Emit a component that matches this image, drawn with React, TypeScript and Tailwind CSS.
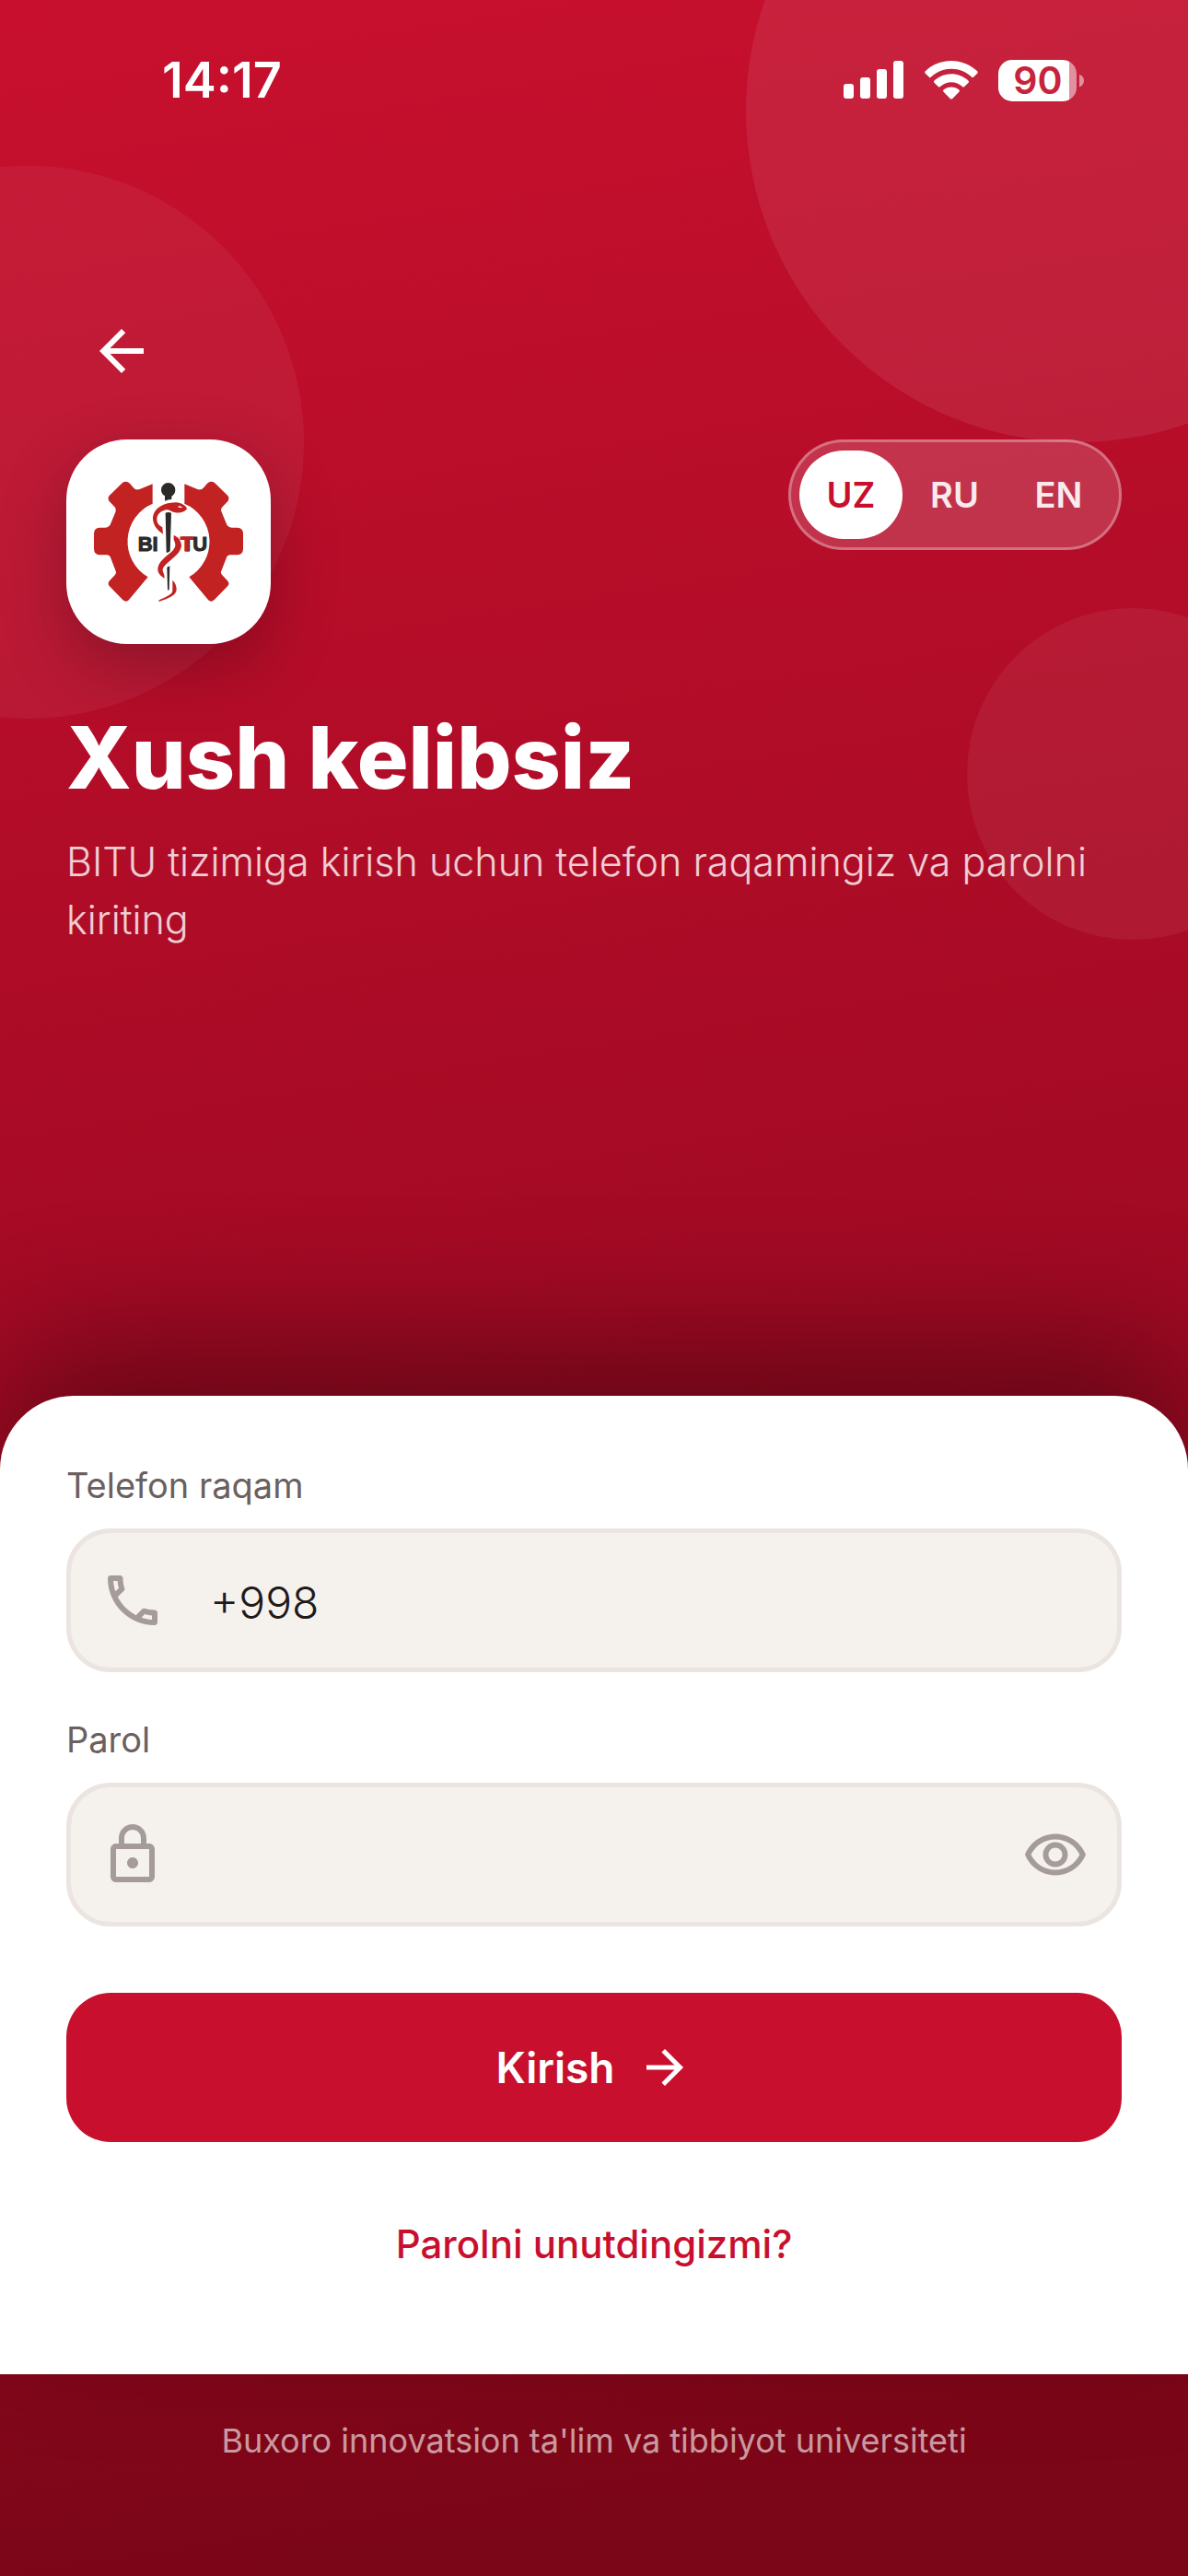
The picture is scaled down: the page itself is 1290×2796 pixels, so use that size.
import { useState } from "react";
import type { ReactNode } from "react";

const LANGUAGES = ["UZ", "RU", "EN"];

function SignalIcon() {
  return (
    <svg className="h-[42px] w-[66px]" viewBox="0 0 66 42" fill="currentColor" aria-hidden="true">
      <rect x="0" y="25" width="11" height="16" rx="3" />
      <rect x="18" y="18" width="11" height="23" rx="3" />
      <rect x="36" y="9" width="11" height="32" rx="3" />
      <rect x="54" y="0" width="11" height="41" rx="3" />
    </svg>
  );
}

function WifiIcon() {
  return (
    <svg className="h-[42px] w-[58px]" viewBox="0 0 58 42" fill="currentColor" aria-hidden="true">
      <path d="M29 0C39.500 0 49.500 4 57.200 11.300Q58.400 12.500 57.200 13.700L53.300 17.600Q52.200 18.700 51 17.500C45 12 37.500 8.800 29 8.800S13 12 7 17.500Q5.800 18.700 4.700 17.600L.8 13.700Q-.4 12.500 .8 11.300C8.500 4 18.500 0 29 0Z" />
      <path d="M29 14.300C36 14.300 42.500 17 47.400 21.500Q48.600 22.700 47.400 23.900L43.200 28Q42.200 29 41 28C37.600 25 33.500 23.200 29 23.200S20.400 25 17 28Q15.800 29 14.800 28L10.600 23.900Q9.400 22.700 10.600 21.500C15.500 17 22 14.300 29 14.300Z" />
      <path d="M29 28.500C32.300 28.500 35.200 29.600 37.400 31.500Q38.500 32.500 37.400 33.700L30.300 41Q29 42.200 27.700 41L20.600 33.700Q19.500 32.500 20.600 31.500C22.800 29.600 25.700 28.500 29 28.500Z" />
    </svg>
  );
}

function Battery() {
  return (
    <div className="relative h-[45px] w-[94px]">
      <svg className="absolute inset-0 size-full" viewBox="0 0 94 45" aria-hidden="true">
        <clipPath id="battery-level">
          <rect width="77" height="45" />
        </clipPath>
        <clipPath id="battery-rest">
          <rect x="77" width="8" height="45" />
        </clipPath>
        <rect width="85" height="45" rx="15" fill="#fff" fillOpacity="0.5" clipPath="url(#battery-rest)" />
        <rect width="85" height="45" rx="15" fill="#fff" clipPath="url(#battery-level)" />
        <path d="M88 16C91.500 17 93 19.500 93 22.500S91.500 28 88 29.500Z" fill="#fff" fillOpacity="0.5" />
      </svg>
      <span className="relative block w-[86px] text-center text-[41px] leading-[45px] font-semibold text-[#c8233c]">
        90
      </span>
    </div>
  );
}

function ArrowIcon({ className }: { className: string }) {
  return (
    <svg className={className} viewBox="0 0 24 24" fill="currentColor" aria-hidden="true">
      <path d="M12 4l-1.410 1.410L16.170 11H4v2h12.170l-5.580 5.590L12 20l8-8z" />
    </svg>
  );
}

function PhoneIcon() {
  return (
    <svg className="size-[72px] shrink-0" viewBox="0 0 24 24" fill="currentColor" aria-hidden="true">
      <path d="M6.540 5c.06.890.210 1.760.450 2.590l-1.200 1.200c-.410-1.200-.670-2.470-.760-3.790h1.510m9.860 12.020c.850.240 1.720.390 2.600.450v1.490c-1.320-.090-2.590-.350-3.800-.750l1.200-1.190M7.500 3H4c-.550 0-1 .450-1 1 0 9.390 7.610 17 17 17 .550 0 1-.450 1-1v-3.490c0-.550-.450-1-1-1-1.240 0-2.450-.200-3.570-.570-.100-.040-.210-.050-.310-.050-.260 0-.510.100-.710.290l-2.200 2.200c-2.830-1.450-5.150-3.760-6.590-6.590l2.200-2.200c.280-.280.360-.670.250-1.020C8.700 6.450 8.500 5.250 8.500 4c0-.550-.450-1-1-1z" />
    </svg>
  );
}

function LockIcon() {
  return (
    <svg className="size-[72px] shrink-0" viewBox="0 0 24 24" fill="currentColor" aria-hidden="true">
      <path d="M18 8h-1V6c0-2.760-2.240-5-5-5S7 3.240 7 6v2H6c-1.100 0-2 .900-2 2v10c0 1.100.900 2 2 2h12c1.100 0 2-.900 2-2V10c0-1.100-.900-2-2-2zM9 6c0-1.660 1.340-3 3-3s3 1.340 3 3v2H9V6zm9 14H6V10h12v10zm-6-3c1.100 0 2-.900 2-2s-.900-2-2-2-2 .900-2 2 .900 2 2 2z" />
    </svg>
  );
}

function EyeIcon() {
  return (
    <svg className="size-[72px]" viewBox="0 0 24 24" fill="currentColor" aria-hidden="true">
      <path d="M12 6.500c3.790 0 7.170 2.130 8.820 5.500-1.650 3.370-5.020 5.500-8.820 5.500S4.830 15.370 3.180 12C4.830 8.630 8.210 6.500 12 6.500m0-2C7 4.500 2.730 7.610 1 12c1.730 4.390 6 7.500 11 7.500s9.270-3.110 11-7.500c-1.730-4.390-6-7.500-11-7.500zm0 5c1.380 0 2.500 1.120 2.500 2.500s-1.120 2.500-2.500 2.500-2.500-1.120-2.500-2.500 1.120-2.500 2.500-2.500m0-2c-2.480 0-4.500 2.020-4.500 4.500s2.020 4.500 4.500 4.500 4.500-2.020 4.500-4.500-2.020-4.500-4.500-4.500z" />
    </svg>
  );
}

const HALF_GEAR =
  "M317 196L275 213Q262 218 253 206L243 194Q231 184 219 192L176 234Q170 242 175 251L193 270Q200 277 197 285L182 322Q177 338 163 338H144Q127 339 126 356V408Q127 426 144 427H168Q178 427 181 438L197 479Q201 486 194 493L177 511Q169 520 176 528L219 572Q231 584 240 573L302 499A134 134 0 0 1 317 260Z";

function Logo() {
  return (
    <svg className="size-full" viewBox="36 51 666 666" role="img" aria-label="BITU">
      <path d={HALF_GEAR} fill="#c22222" />
      <path d={HALF_GEAR} fill="#c22222" transform="matrix(-1 0 0 1 738 0)" />
      <g fontFamily="Liberation Sans, sans-serif" fontWeight="700" fontSize="66" strokeWidth="3">
        <text x="269" y="415" fill="#2b2a29" stroke="#2b2a29">BI</text>
        <text x="412" y="413" fill="#2b2a29" stroke="#2b2a29">T</text>
        <text x="448" y="415" fill="#2b2a29" stroke="#2b2a29">U</text>
        <text x="407" y="415" fill="#c22222" stroke="#c22222">T</text>
      </g>
      <path d="M357 248V235C348 230 345 222 345 215A23 23 0 0 1 391 215C391 223 387 231 379 236V246Q367 247 357 251Z" fill="#2b2a29" />
      <path d="M359 290Q368 286 378 290L374 414Q368 421 362 419Z" fill="#2b2a29" />
      <path d="M364 467L373 463L371 538Q368 547 366 538Z" fill="#2b2a29" />
      <path
        d="M351 359C330 345 317 328 318 304C321 277 350 257 392 256C412 257 427 267 429 277C423 288 405 292 387 288C377 285 370 279 361 280C342 285 332 295 331 310C331 325 339 332 349 337Z"
        fill="#c22222"
      />
      <path d="M399 270Q405 264 415 272Q405 275 399 270Z" fill="#fff" />
      <path
        d="M386 363C400 367 411 382 411 397C409 419 388 434 370 449C358 460 349 468 350 477C351 485 356 488 356 503C342 496 333 484 334 471C337 450 357 435 374 421C389 408 397 397 386 378Z"
        fill="#c22222"
      />
      <path d="M382 509C391 518 395 528 395 540C394 558 372 567 338 579C336 577 337 576 339 574C358 564 383 556 382 543Z" fill="#c22222" />
    </svg>
  );
}

function Field({
  id,
  label,
  icon,
  children,
}: {
  id: string;
  label: string;
  icon: ReactNode;
  children: ReactNode;
}) {
  return (
    <div className="flex flex-col gap-6">
      <label htmlFor={id} className="text-[38px] leading-[45px] text-[#6b5f5f]">
        {label}
      </label>
      <div className="flex h-[156px] items-center rounded-[48px] border-[5px] border-[#ebe4e0] bg-[#f5f1ed] px-[31px] text-[#a69b9b]">
        {icon}
        {children}
      </div>
    </div>
  );
}

export default function App() {
  const [language, setLanguage] = useState("UZ");
  const [phone, setPhone] = useState("+998");
  const [password, setPassword] = useState("");
  const [visible, setVisible] = useState(false);

  return (
    <div className="relative flex min-h-screen flex-col overflow-hidden bg-[linear-gradient(171deg,#c8102e_0%,#a30a24_50%,#7a0617_96%)] font-[Inter,sans-serif] text-white">
      <div className="absolute -top-60 -right-60 size-[720px] rounded-full bg-white/8" />
      <div className="absolute top-[180px] -left-[270px] size-[600px] rounded-full bg-white/5" />
      <div className="absolute top-[660px] -right-[120px] size-[360px] rounded-full bg-white/6" />

      <div className="relative flex h-[174px] items-center justify-between pr-[112px] pl-[176px]">
        <time className="text-[54px] leading-[60px] font-semibold">14:17</time>
        <div className="flex items-center gap-[22px]">
          <SignalIcon />
          <WifiIcon />
          <Battery />
        </div>
      </div>

      <header className="relative px-[72px] pt-[147px]">
        <button type="button" aria-label="Orqaga" className="flex size-[120px] items-center justify-center">
          <ArrowIcon className="size-[72px] rotate-180" />
        </button>
        <div className="mt-9 flex items-start justify-between">
          <div className="size-[222px] rounded-[66px] bg-white shadow-[0_24px_70px_rgba(0,0,0,0.25)]">
            <Logo />
          </div>
          <div className="flex h-[120px] rounded-full border-[3px] border-white/30 bg-white/16 p-[9px]">
            {LANGUAGES.map((code) => (
              <button
                key={code}
                type="button"
                aria-pressed={language === code}
                onClick={() => setLanguage(code)}
                className={
                  language === code
                    ? "w-[112px] rounded-full bg-white text-[38px] font-semibold text-[#c8102e]"
                    : "w-[113px] rounded-full text-[38px] font-semibold text-white/90"
                }
              >
                {code}
              </button>
            ))}
          </div>
        </div>
        <h1 className="mt-[69px] text-[93px] leading-[108px] font-extrabold">Xush kelibsiz</h1>
        <p className="mt-7 text-[43px] leading-[63px] font-light text-white/80">
          BITU tizimiga kirish uchun telefon raqamingiz va parolni kiriting
        </p>
      </header>

      <form
        onSubmit={(event) => event.preventDefault()}
        className="relative mt-auto flex flex-col rounded-t-[80px] bg-white px-[72px] pt-[75px] pb-[114px] shadow-[0_-60px_140px_rgba(0,0,0,0.35)]"
      >
        <div className="flex flex-col gap-[51px]">
          <Field id="phone" label="Telefon raqam" icon={<PhoneIcon />}>
            <input
              id="phone"
              type="tel"
              value={phone}
              onChange={(event) => setPhone(event.target.value)}
              className="ml-12 min-w-0 flex-1 bg-transparent pt-1.5 text-[48px] font-light text-[#1f1a1a] outline-none"
            />
          </Field>
          <Field id="password" label="Parol" icon={<LockIcon />}>
            <input
              id="password"
              type={visible ? "text" : "password"}
              value={password}
              onChange={(event) => setPassword(event.target.value)}
              className="ml-12 min-w-0 flex-1 bg-transparent pt-1.5 text-[48px] font-light text-[#1f1a1a] outline-none"
            />
            <button type="button" aria-label="Parolni ko'rsatish" onClick={() => setVisible(!visible)}>
              <EyeIcon />
            </button>
          </Field>
        </div>
        <button
          type="submit"
          className="mt-[72px] flex h-[162px] items-center justify-center gap-6 rounded-[48px] bg-[#c8102e] text-[46px] font-semibold"
        >
          Kirish
          <ArrowIcon className="size-[60px]" />
        </button>
        <a href="#" className="mt-[84px] self-center text-[42px] leading-[54px] font-medium text-[#c8102e]">
          Parolni unutdingizmi?
        </a>
      </form>

      <footer className="relative px-[72px] pt-[51px] pb-[126px] text-center text-[36px] leading-[42px] text-white/60">
        Buxoro innovatsion ta'lim va tibbiyot universiteti
      </footer>
    </div>
  );
}
